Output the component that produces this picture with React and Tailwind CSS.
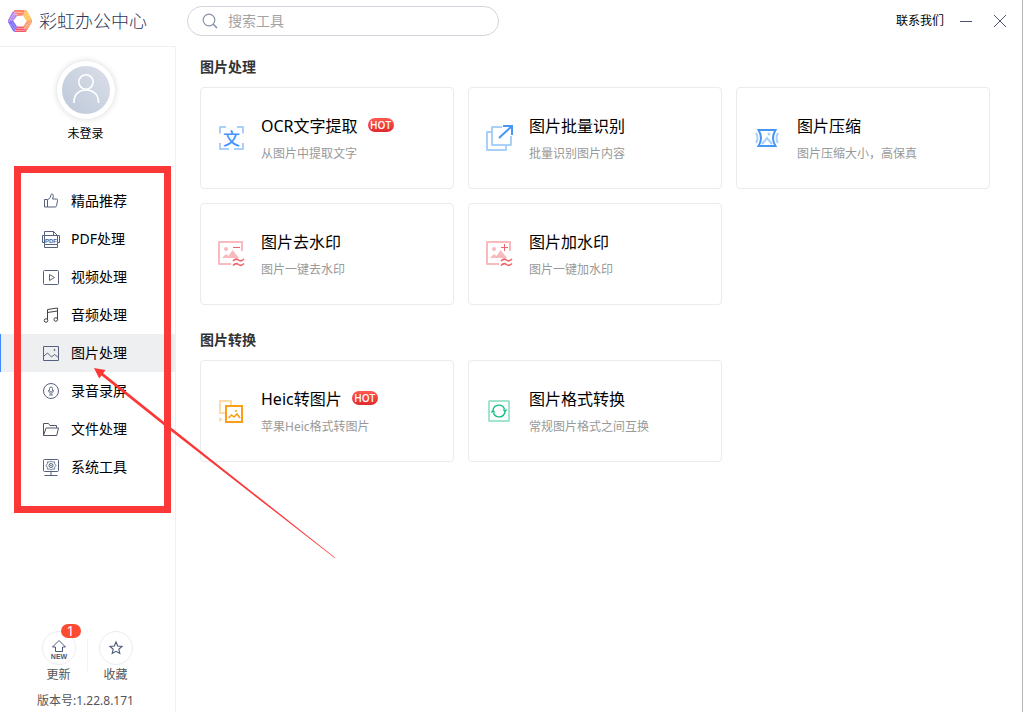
import { useState } from "react";

/* ================= DATA ================= */

const MENU = [
  { label: "精品推荐", icon: ThumbIcon },
  { label: "PDF处理", icon: PdfIcon },
  { label: "视频处理", icon: VideoIcon },
  { label: "音频处理", icon: MusicIcon },
  { label: "图片处理", icon: PictureIcon },
  { label: "录音录屏", icon: MicIcon },
  { label: "文件处理", icon: FolderIcon },
  { label: "系统工具", icon: SystemIcon },
];

const SECTIONS = [
  {
    title: "图片处理",
    tools: [
      { name: "OCR文字提取", desc: "从图片中提取文字", icon: OcrIcon, hot: true },
      { name: "图片批量识别", desc: "批量识别图片内容", icon: BatchIcon },
      { name: "图片压缩", desc: "图片压缩大小，高保真", icon: CompressIcon },
      { name: "图片去水印", desc: "图片一键去水印", icon: RemoveMarkIcon },
      { name: "图片加水印", desc: "图片一键加水印", icon: AddMarkIcon },
    ],
  },
  {
    title: "图片转换",
    tools: [
      { name: "Heic转图片", desc: "苹果Heic格式转图片", icon: HeicIcon, hot: true },
      { name: "图片格式转换", desc: "常规图片格式之间互换", icon: ConvertIcon },
    ],
  },
];

/* ================= COMPONENT ================= */

export default function App() {
  const [active, setActive] = useState("图片处理");
  const [keyword, setKeyword] = useState("");

  return (
    <div className="flex min-h-screen border-r border-[#b4b4b4] bg-white font-['Noto_Sans','Noto_Sans_CJK_SC',sans-serif] text-black">
      {/* ===== SIDEBAR ===== */}
      <aside className="relative z-10 flex w-44 shrink-0 flex-col">
        <div className="flex h-[47px] items-center gap-[7px] border-b border-[#f0f0f2] pb-1 pl-2">
          <Logo />
          <h1 className="text-lg leading-6 font-light whitespace-nowrap text-[#2f3658]">彩虹办公中心</h1>
        </div>

        <div className="flex flex-1 flex-col border-r border-[#f0f0f2]">
          <button className="flex h-[119px] flex-col items-center gap-[5px] pt-3.5 pr-1">
            <Avatar />
            <span className="text-xs leading-5">未登录</span>
          </button>

          <Menu active={active} onSelect={setActive} />

          {/* FOOTER */}
          <div className="mt-auto pb-px">
            <div className="flex justify-center pr-px">
              <FooterButton label="更新" badge="1">
                <UpdateIcon />
              </FooterButton>
              <div className="mt-2 h-8 w-px bg-[#f3f3f5]" />
              <FooterButton label="收藏">
                <StarIcon />
              </FooterButton>
            </div>
            <p className="mt-1.5 pr-1 text-center text-xs leading-5 text-[#555]">
              版本号:1.22.8.171
            </p>
          </div>
        </div>
      </aside>

      {/* ===== CONTENT ===== */}
      <div className="min-w-0 flex-1">
        <header className="flex h-[42px] items-center justify-between pr-4 pl-[11px]">
          <label className="flex h-[30px] w-[312px] items-center gap-2.5 rounded-full border border-[#d3d5dc] px-3.5">
            <SearchIcon />
            <input
              value={keyword}
              onChange={(e) => setKeyword(e.target.value)}
              placeholder="搜索工具"
              aria-label="搜索工具"
              className="w-full text-sm leading-5 outline-none placeholder:text-[#a3a3a3]"
            />
          </label>

          <div className="flex items-center">
            <a href="#contact" className="text-xs leading-5">联系我们</a>
            <button aria-label="最小化" className="ml-4">
              <svg width="12" height="12" stroke="#4a5470">
                <path d="M0 6.500h12" />
              </svg>
            </button>
            <button aria-label="关闭" className="ml-[22px]">
              <svg width="12" height="12" stroke="#4a5470">
                <path d="M0 0l12 12M12 0L0 12" />
              </svg>
            </button>
          </div>
        </header>

        <main className="flex flex-col gap-[25px] pt-[15px] pr-8 pb-6 pl-6">
          {SECTIONS.map((section) => (
            <section key={section.title}>
              <h2 className="mb-2.5 text-sm leading-5 font-bold text-[#333]">
                {section.title}
              </h2>
              <div className="grid grid-cols-3 gap-3.5">
                {section.tools.map((tool) => (
                  <ToolCard key={tool.name} {...tool} />
                ))}
              </div>
            </section>
          ))}
        </main>
      </div>
    </div>
  );
}

/* ================= UI PARTS ================= */

function Menu({ active, onSelect }) {
  return (
    <nav className="relative pt-4 pb-[27px]">
      {MENU.map(({ label, icon: Icon }) => (
        <button
          key={label}
          onClick={() => onSelect(label)}
          className={`flex h-[38px] w-full items-center gap-[11px] border-l pl-[41px] text-sm leading-5 ${
            active === label
              ? "border-[#3d8bff] bg-[#eeeff1]"
              : "border-transparent"
          }`}
        >
          <Icon />
          {label}
        </button>
      ))}

      {/* highlight frame and pointer */}
      <div className="pointer-events-none absolute inset-y-0 right-1 left-3.5 border-7 border-[#fb3838]" />
      <svg
        width="340"
        height="400"
        fill="#fb3838"
        className="pointer-events-none absolute top-0 left-0 max-w-none"
      >
        <path d="M94 202l11.500 2-2.300 3.200L171 261.500 335 391.500l-.4.500L169.500 263.800 101.500 209.500l-2.300 3z" />
      </svg>
    </nav>
  );
}

function ToolCard({ name, desc, icon: Icon, hot }) {
  return (
    <button className="flex h-[102px] items-center gap-4 rounded border border-[#ebebeb] pl-4 text-left">
      <Icon />
      <div className="pt-0.5">
        <div className="flex items-center gap-2.5">
          <h3 className="text-base leading-6">{name}</h3>
          {hot && (
            <span className="mb-0.5 flex h-3.5 w-[26px] items-center justify-center rounded-full bg-linear-to-b from-[#ff5a50] to-[#e0282e] font-['Open_Sans',sans-serif] text-[10px] leading-3 font-semibold text-white">
              HOT
            </span>
          )}
        </div>
        <p className="mt-1.5 text-xs leading-5 text-[#999]">{desc}</p>
      </div>
    </button>
  );
}

function FooterButton({ label, badge, children }) {
  return (
    <button className="relative flex w-14 flex-col items-center">
      <span className="flex size-[34px] items-center justify-center rounded-full border border-[#ececf0]">
        {children}
      </span>
      <span className="text-xs leading-5 text-[#555]">{label}</span>
      {badge && (
        <span className="absolute -top-[7px] right-1.5 flex h-3.5 w-5 items-center justify-center rounded-full bg-[#fc4b32] text-sm leading-3.5 text-white">
          {badge}
        </span>
      )}
    </button>
  );
}

function Avatar() {
  return (
    <span className="flex size-[58px] items-center justify-center rounded-full bg-white shadow-[0_0_6px_rgba(0,0,0,0.16)]">
      <svg width="48" height="48" viewBox="0 0 48 48" fill="none">
        <defs>
          <linearGradient id="avatar" x1="1" y1="0" x2="0" y2="1">
            <stop offset="0" stopColor="#dadfe9" />
            <stop offset="1" stopColor="#bdc8d8" />
          </linearGradient>
        </defs>
        <circle cx="24" cy="24" r="24" fill="url(#avatar)" />
        <g stroke="#fff" strokeWidth="1.600">
          <circle cx="24" cy="16" r="7.200" />
          <path d="M12 37v-1.500C12 28.500 17 24 24 24s12.500 4.500 12.500 11.500V37" />
        </g>
      </svg>
    </span>
  );
}

function Logo() {
  return (
    <svg width="24" height="24" viewBox="0 0 24 24" className="shrink-0">
      <path d="M6.500 1H17l-2 5.500-6 .5-4-3z" fill="#fb8470" />
      <path d="M17 1l2 .5L24 11l-5 1.500-4-6z" fill="#fcc35c" />
      <path d="M24 11v2l-5.500 9.500-4-4 4-6z" fill="#fb9a6c" />
      <path d="M18.500 22.500L17 23H6.500L9 17.500h6z" fill="#f4566c" />
      <path d="M6.500 23L5 22 0 13l5-1.500 4 6z" fill="#7a6cf6" />
      <path d="M0 13v-2l5-9 4 5-4 5z" fill="#b07fef" />
      <path
        d="M6 3.500h9M5 5.500h5M9 19.500h8M7 21.500h10M1.500 11.500l5-8M3.500 12l4-7M2 14.500l5 7M4 13.500l4 6M16 5.500l4-2M17 8l4.500-2.500M18.500 10.500l4-2.500M17 17l6-4M16 19.500l5-3.500"
        stroke="#fff"
        strokeWidth=".7"
        opacity=".55"
      />
    </svg>
  );
}

/* ================= MENU ICONS ================= */

function MenuSvg({ children, color = "#56617e" }) {
  return (
    <svg
      width="18"
      height="18"
      viewBox="0 0 18 18"
      fill="none"
      stroke={color}
      strokeLinejoin="round"
      className="shrink-0"
    >
      {children}
    </svg>
  );
}

function ThumbIcon() {
  return (
    <MenuSvg>
      <path d="M2.500 7.500h3v7.500h-3zM5.500 8l2.800-2.500L9 2.500c.3-.8 2.200-.7 2.300.8.1 1.200-.3 2.400-.8 3.700h4.200c.8 0 1 .6.900 1.200l-1.100 5.600c-.2.900-.7 1.200-1.400 1.200H5.500" />
    </MenuSvg>
  );
}

function PdfIcon() {
  return (
    <MenuSvg>
      <path d="M2.500 5.500v-4h9l4 4M11.500 1.500v4h4M2.500 14.500v3h13v-3M2.500 5.500h-2v7h2M15.500 5.500h2v7h-2M2.500 5.500v9h13v-9z" />
      <text
        x="9"
        y="12.500"
        textAnchor="middle"
        fontSize="6"
        fontWeight="700"
        fill="#56617e"
        stroke="none"
        fontFamily="Liberation Sans, sans-serif"
      >
        PDF
      </text>
    </MenuSvg>
  );
}

function VideoIcon() {
  return (
    <MenuSvg>
      <rect x="1.500" y="2.500" width="15" height="14" rx="1" />
      <path d="M7.500 6.500v6l5-3z" />
    </MenuSvg>
  );
}

function MusicIcon() {
  return (
    <MenuSvg color="#444">
      <path d="M5.500 14V3.500l10-1.500v11.500M5.500 6.500l10-1.500" />
      <circle cx="4" cy="14.500" r="1.800" />
      <circle cx="13.800" cy="13.500" r="1.800" />
    </MenuSvg>
  );
}

function PictureIcon() {
  return (
    <MenuSvg>
      <path d="M1.500 2.500h15v14h-15zM2 12l3.500-3 4 4 3-2.500 4 3" />
      <circle cx="12.500" cy="6" r=".6" />
    </MenuSvg>
  );
}

function MicIcon() {
  return (
    <MenuSvg>
      <circle cx="9" cy="9" r="7.500" />
      <rect x="7.500" y="5" width="3" height="5" rx="1.500" strokeWidth=".9" />
      <path d="M6.500 8c0 4.500 5 4.500 5 0M9 11.500v1.500M7 13h4" strokeWidth=".8" />
    </MenuSvg>
  );
}

function FolderIcon() {
  return (
    <MenuSvg color="#4e5668">
      <path d="M1.500 15.500v-12h5l1.500 2h6.500v2.500M1.500 15.500L4 8h12.500l-1.800 7.500z" />
    </MenuSvg>
  );
}

function SystemIcon() {
  return (
    <MenuSvg>
      <rect x="1.500" y="1.500" width="15" height="12" rx="1" />
      <path d="M9 13.500v4M2.500 17.500h13" />
      <path d="M9 3l1.500 1 2-.2.200 2L14 7.500l-1.300 1.700-.2 2-2-.2L9 12l-1.500-1-2 .2-.2-2L4 7.500l1.300-1.700.2-2 2 .2z" strokeWidth=".8" />
      <circle cx="9" cy="7.500" r="2" />
      <circle cx="9" cy="7.500" r=".4" />
    </MenuSvg>
  );
}

/* ================= TOOL ICONS ================= */

function ToolSvg({ children, color }) {
  return (
    <svg
      width="28"
      height="28"
      viewBox="0 0 28 28"
      fill="none"
      stroke={color}
      strokeWidth="2"
      className="shrink-0"
    >
      {children}
    </svg>
  );
}

function OcrIcon() {
  return (
    <ToolSvg color="#a9d0fb">
      <path d="M3 9.500V3h6M20 3h6v6.500M26 19v6h-9M12 25H3v-6" strokeLinejoin="round" />
      <text
        x="14.500"
        y="20.500"
        textAnchor="middle"
        fontSize="17"
        fontWeight="500"
        fill="#4596f7"
        stroke="none"
        fontFamily="Noto Sans CJK SC, sans-serif"
      >
        文
      </text>
    </ToolSvg>
  );
}

function BatchIcon() {
  return (
    <ToolSvg color="#a9d0fb">
      <path d="M17 3H7v18h19v-9" strokeLinejoin="round" />
      <path d="M7 8H2v18h19v-5" strokeLinejoin="round" />
      <path d="M14 14L27 2M18 2h9v9" stroke="#4596f7" />
    </ToolSvg>
  );
}

function CompressIcon() {
  return (
    <ToolSvg color="#a9d0fb">
      <path d="M3 9q3 5 0 10M25 9q-3 5 0 10M9 20l5-6 5 6" />
      <circle cx="16" cy="10" r="1.500" fill="#a9d0fb" stroke="none" />
      <path d="M5.500 6h17q-5 8 0 16h-17q5-8 0-16z" stroke="#4596f7" />
    </ToolSvg>
  );
}

function WatermarkIcon({ children }) {
  return (
    <ToolSvg color="#f8babd">
      <path d="M14 24H2V2h23v9" strokeLinejoin="round" />
      <g fill="#f8babd" stroke="none">
        <circle cx="9" cy="9" r="2" />
        <path d="M5 18l4-4 2.500 2 4-6L22 18z" />
      </g>
      <g stroke="#ee6469">
        <path d="M16 21q3-3 5.500-1t5.500-1M16 25.500q3-3 5.500-1t5.500-1" strokeWidth="1.600" />
        {children}
      </g>
    </ToolSvg>
  );
}

function RemoveMarkIcon() {
  return (
    <WatermarkIcon>
      <path d="M16 7.500h7" strokeWidth="1" />
    </WatermarkIcon>
  );
}

function AddMarkIcon() {
  return (
    <WatermarkIcon>
      <path d="M16 7.500h7M19.500 4v7" strokeWidth="1" />
    </WatermarkIcon>
  );
}

function HeicIcon() {
  return (
    <ToolSvg color="#fddcaa">
      <path d="M8 16H3V4h11v4" />
      <path d="M2 20l4 2.500L2 25z" fill="#fddcaa" stroke="none" />
      <path d="M9 9h16v16H9z" stroke="#fb9f18" />
      <path d="M11.500 21l3-3 2.500 2 3-3 3 4" stroke="#fb9f18" strokeWidth="1.600" />
      <circle cx="19" cy="14" r="1" fill="#fb9f18" stroke="none" />
    </ToolSvg>
  );
}

function ConvertIcon() {
  return (
    <ToolSvg color="#a2e5cd">
      <rect x="4" y="4" width="20" height="20" rx=".5" />
      <path d="M8 13a6 6 0 0 1 11.500-1M20 15a6 6 0 0 1-11.500 1" stroke="#14bf83" strokeWidth="1.400" />
      <path d="M17.500 12.500h5L20 15.500zM5.500 15.500h5L8 12.500z" fill="#14bf83" stroke="none" />
    </ToolSvg>
  );
}

/* ================= OTHER ICONS ================= */

function SearchIcon() {
  return (
    <svg width="16" height="16" viewBox="0 0 16 16" fill="none" stroke="#8791ab" strokeWidth="1.200" className="shrink-0">
      <circle cx="7" cy="7" r="5.800" />
      <path d="M11 11l4 4" strokeWidth="1.600" />
    </svg>
  );
}

function UpdateIcon() {
  return (
    <svg width="18" height="20" viewBox="0 0 18 20" fill="none" stroke="#4b5878" className="mt-1">
      <path d="M9 .5L2.500 7h3v4.500h7V7h3z" />
      <text
        x="9"
        y="18.500"
        textAnchor="middle"
        fontSize="7"
        fontWeight="700"
        fill="#4b5878"
        stroke="none"
        fontFamily="Liberation Sans, sans-serif"
      >
        NEW
      </text>
    </svg>
  );
}

function StarIcon() {
  return (
    <svg width="16" height="16" viewBox="0 0 16 16" fill="none" stroke="#4b5878" strokeWidth="1.100">
      <path d="M8 2l1.700 4 4.300.4-3.200 2.900 1 4.200L8 11.300l-3.800 2.200 1-4.200L2 6.400 6.300 6z" />
    </svg>
  );
}
